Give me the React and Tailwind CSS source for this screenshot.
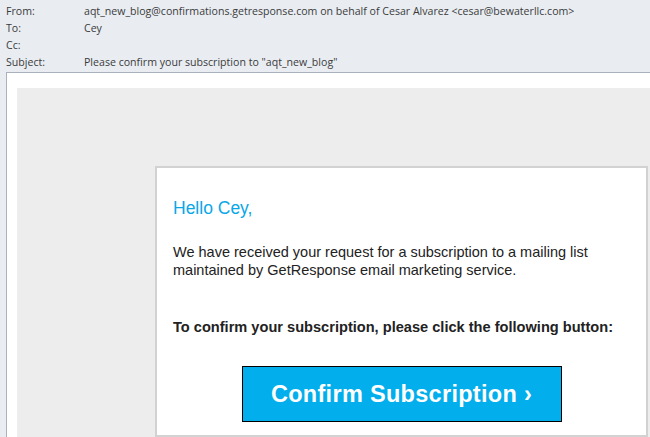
import React from 'react';

const headerRows = [
  { label: 'From:', value: 'aqt_new_blog@confirmations.getresponse.com on behalf of Cesar Alvarez <cesar@bewaterllc.com>' },
  { label: 'To:', value: 'Cey' },
  { label: 'Cc:', value: '' },
  { label: 'Subject:', value: 'Please confirm your subscription to "aqt_new_blog"' },
];

const App = () => {
  return (
    <div className="w-[650px] h-[437px] overflow-hidden bg-[#e9edf2] flex flex-col">
      {/* Message header */}
      <div className="pt-[3px] pl-[6px] font-['Open_Sans',sans-serif] text-[10.6px] text-[#3b3b3b]">
        {headerRows.map((row) => (
          <div key={row.label} className="flex h-[17px] items-center">
            <div className="w-[78px]">{row.label}</div>
            <div className="whitespace-nowrap">{row.value}</div>
          </div>
        ))}
      </div>

      {/* Message body */}
      <div className="mt-[1px] ml-[6px] flex-1 border-t border-l border-[#a9b1bd] bg-white pl-[10px] pt-[15px] flex flex-col">
        <div className="flex-1 bg-[#ededed] pl-[138px] pt-[78px]">
          <div className="w-[493px] h-full border-2 border-[#d2d2d2] bg-white pl-[16px] pt-[30px] font-['Liberation_Sans',Arial,sans-serif]">
            <p className="text-[17.5px] leading-[20px] text-[#0aa7e7]">Hello Cey,</p>
            <p className="mt-[25px] text-[14.5px] leading-[18px] text-[#222]">
              We have received your request for a subscription to a mailing list
              <br />
              maintained by GetResponse email marketing service.
            </p>
            <p className="mt-[39px] text-[14.6px] leading-[18px] font-bold text-[#222]">
              To confirm your subscription, please click the following button:
            </p>
            <div className="mt-[30px] flex justify-center pr-[16px]">
              <button className="w-[320px] h-[56px] border border-black bg-[#02aeeb] text-white text-[23.5px] font-bold tracking-[0.3px] pt-[2px]">
                Confirm Subscription ›
              </button>
            </div>
          </div>
        </div>
      </div>
    </div>
  );
};

export default App;
